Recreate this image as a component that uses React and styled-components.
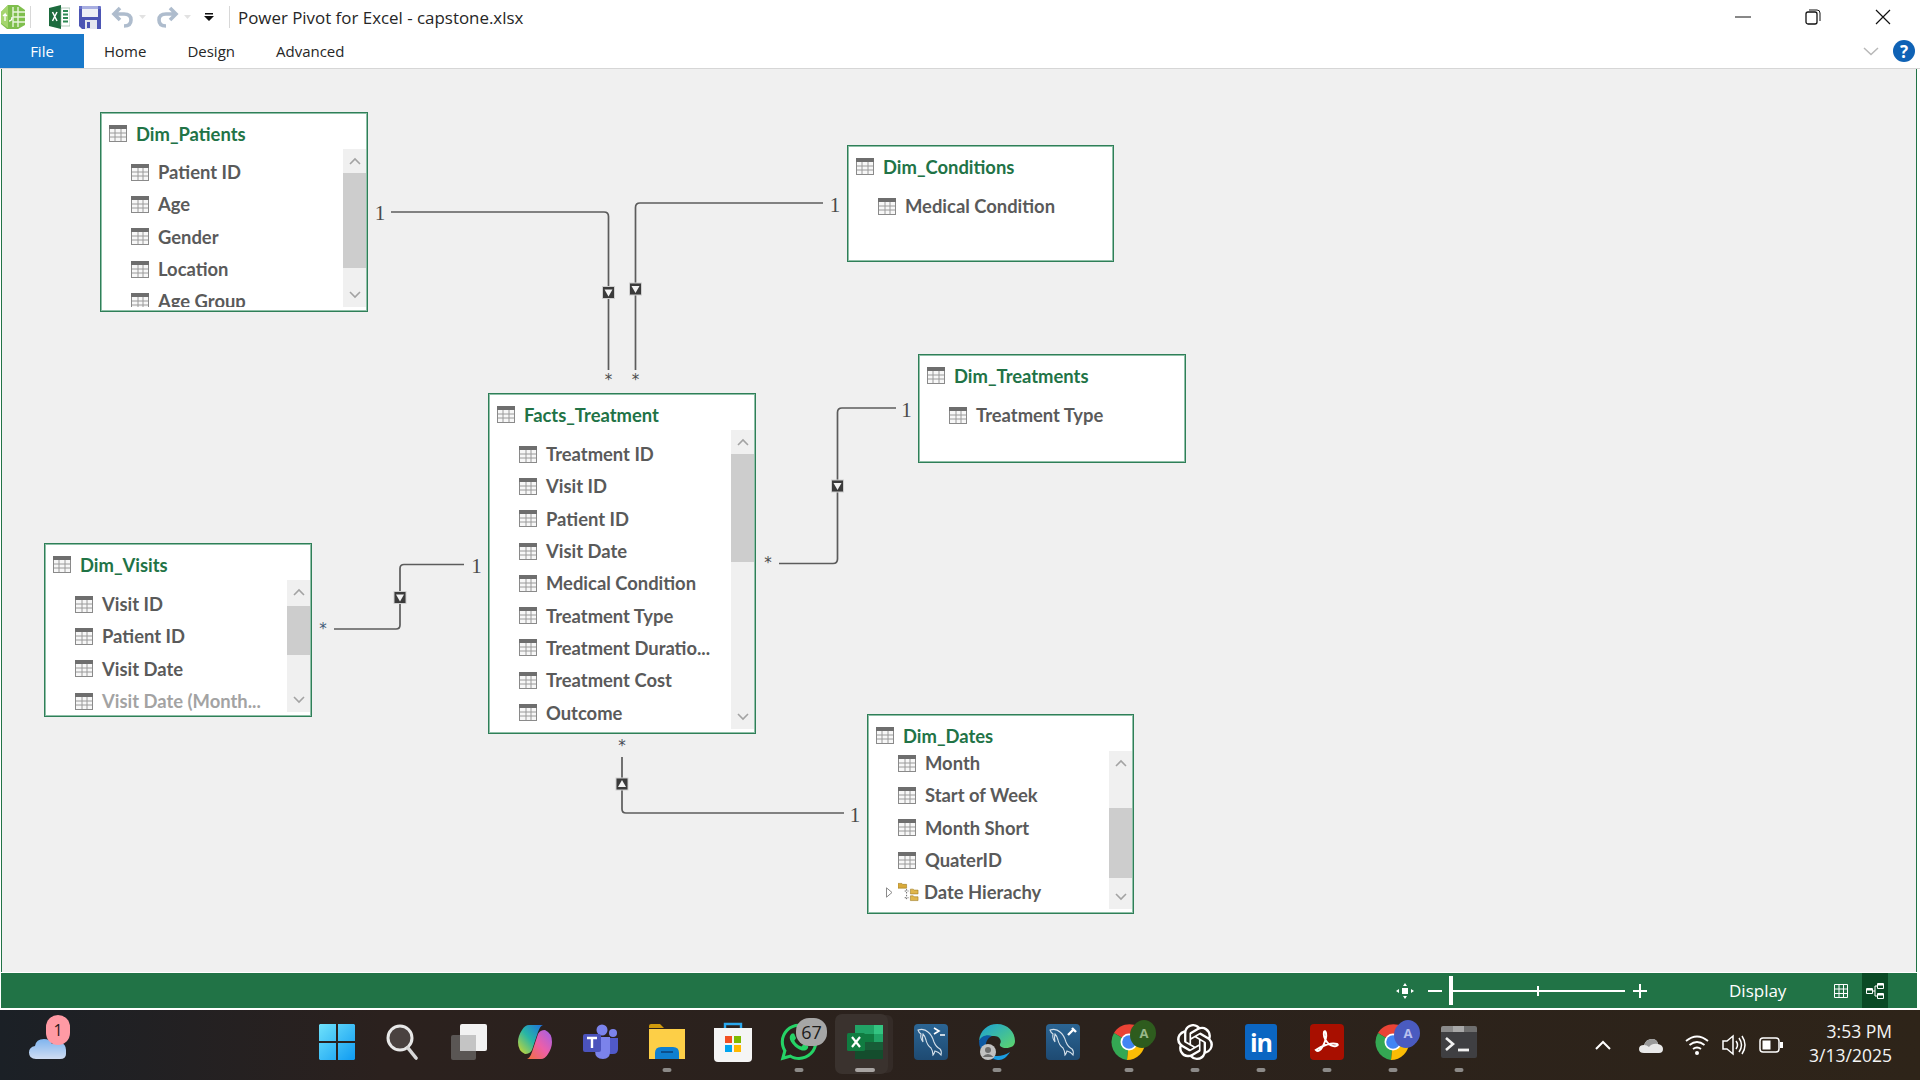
import React from "react"
import styled, { createGlobalStyle } from "styled-components"
import { FaWhatsapp } from "react-icons/fa"
import { SiOpenai } from "react-icons/si"

const UI = `"Open Sans", "Noto Sans", sans-serif`
const FIELD = `Lato, "Noto Sans", sans-serif`
const CANVAS_X = 2
const CANVAS_Y = 69

const GlobalStyle = createGlobalStyle`
  html, body { margin: 0; padding: 0; background: #fff; }
  * { box-sizing: border-box; }
`

const Page = styled.div`
  width: 1920px;
  height: 1080px;
  display: flex;
  flex-direction: column;
  overflow: hidden;
  background: #fff;
  font-family: ${UI};
`

/* title bar */
const TitleBar = styled.div`
  height: 34px;
  display: flex;
  align-items: center;
  flex-shrink: 0;
`
const QuickIcon = styled.div`
  width: ${p => p.$w}px;
  margin-left: ${p => p.$ml || 0}px;
  display: flex;
  align-items: center;
  justify-content: center;
`
const Divider = styled.div`
  width: 1px;
  height: 22px;
  background: #d8d8d8;
  margin-left: ${p => p.$ml}px;
`
const Title = styled.div`
  margin-left: 8px;
  font-size: 16.9px;
  color: #262626;
  white-space: nowrap;
`
const WindowControls = styled.div`
  margin-left: auto;
  display: flex;
  padding-right: 2px;
`
const WindowButton = styled.div`
  width: 70px;
  height: 34px;
  display: flex;
  align-items: center;
  justify-content: center;
`

/* ribbon tabs */
const TabBar = styled.div`
  height: 35px;
  display: flex;
  align-items: flex-start;
  border-bottom: 1px solid #d6d6d6;
  flex-shrink: 0;
`
const FileTab = styled.div`
  width: 84px;
  height: 34px;
  background: #1979ca;
  color: #fff;
  font-size: 15px;
  display: flex;
  align-items: center;
  justify-content: center;
`
const Tab = styled.div`
  height: 34px;
  margin-left: ${p => p.$ml}px;
  display: flex;
  align-items: center;
  font-size: 15px;
  color: #262626;
`
const TabTools = styled.div`
  margin-left: auto;
  height: 34px;
  display: flex;
  align-items: center;
  gap: 14px;
  padding-right: 5px;
`
const Help = styled.div`
  width: 22px;
  height: 22px;
  border-radius: 50%;
  background: #0f62b5;
  color: #fff;
  font: 700 17px ${UI};
  display: flex;
  align-items: center;
  justify-content: center;
`

/* diagram */
const Canvas = styled.div`
  flex: 1;
  min-height: 0;
  position: relative;
  margin: 0 3px 0 1px;
  background: #f0f0f0;
  border-left: 1px solid #217346;
  border-right: 1px solid #217346;
`
const Wires = styled.svg`
  position: absolute;
  left: 0;
  top: 0;
`
const Mark = styled.span`
  position: absolute;
  left: ${p => p.$x - CANVAS_X}px;
  top: ${p => p.$y - CANVAS_Y}px;
  transform: translate(-50%, -50%);
  line-height: 1;
  color: ${p => p.$color || "#4a4a4a"};
  font-family: ${p => (p.$star ? `"DejaVu Sans", sans-serif` : `"Liberation Serif", serif`)};
  font-size: ${p => (p.$star ? 15 : 21)}px;
`
const TableBox = styled.div`
  position: absolute;
  left: ${p => p.$x - CANVAS_X}px;
  top: ${p => p.$y - CANVAS_Y}px;
  width: ${p => p.$w}px;
  height: ${p => p.$h}px;
  background: #fff;
  border: 1px solid #2f7f58;
  box-shadow: inset 0 0 0 1px #8fc0a8;
  padding: 1px 1px 4px;
  display: flex;
  flex-direction: column;
`
const TableHead = styled.div`
  height: 35px;
  flex-shrink: 0;
  display: flex;
  align-items: center;
  gap: 9px;
  padding: 4px 0 0 7px;
  font: 700 18.4px ${FIELD};
  color: #217346;
`
const TableBody = styled.div`
  flex: 1;
  min-height: 0;
  display: flex;
`
const FieldList = styled.div`
  flex: 1;
  min-width: 0;
  overflow: hidden;
  & > :first-child {
    margin-top: ${p => p.$pad}px;
  }
`
const FieldRow = styled.div`
  height: 32.3px;
  display: flex;
  align-items: center;
  padding-left: ${p => (p.$tree ? 17 : 29)}px;
  gap: ${p => (p.$tree ? 5 : 9)}px;
  font: 700 18.4px ${FIELD};
  color: ${p => (p.$hidden ? "#a3a3a3" : "#5a5a5a")};
  white-space: nowrap;
`
const ScrollBar = styled.div`
  width: 23px;
  flex-shrink: 0;
  background: #f0f0f0;
  display: flex;
  flex-direction: column;
`
const ScrollButton = styled.div`
  height: 24px;
  flex-shrink: 0;
  display: flex;
  align-items: center;
  justify-content: center;
`
const ScrollTrack = styled.div`
  flex: 1;
  padding-top: ${p => p.$top}px;
`
const ScrollThumb = styled.div`
  height: ${p => p.$size}px;
  background: #cdcdcd;
`

/* status bar */
const StatusBar = styled.div`
  height: 35px;
  flex-shrink: 0;
  margin: 1px 3px 2px 1px;
  background: #217346;
  display: flex;
  align-items: center;
  color: #fff;
`
const StatusSpacer = styled.div`
  width: ${p => p.$w}px;
  flex-shrink: 0;
`
const ZoomTrack = styled.div`
  position: relative;
  width: 176px;
  height: 2px;
  background: #fff;
`
const ZoomHandle = styled.div`
  position: absolute;
  left: 0;
  top: -14px;
  width: 4px;
  height: 29px;
  background: #fff;
`
const ZoomTick = styled.div`
  position: absolute;
  left: 88px;
  top: -4px;
  width: 2px;
  height: 10px;
  background: #fff;
`
const DisplayLabel = styled.div`
  font-size: 17px;
  width: 72px;
  flex-shrink: 0;
`
const ViewButton = styled.div`
  width: 26px;
  height: 35px;
  display: flex;
  align-items: center;
  justify-content: center;
  background: ${p => (p.$active ? "#0a4a25" : "transparent")};
`

/* taskbar */
const TaskBar = styled.div`
  height: 70px;
  flex-shrink: 0;
  display: flex;
  align-items: stretch;
  background: linear-gradient(90deg, #1b2026 0%, #2b211e 20%, #2b221c 60%, #2e2419 100%);
  color: #fff;
`
const WeatherSlot = styled.div`
  width: 304px;
  flex-shrink: 0;
  position: relative;
  display: flex;
  align-items: center;
  padding-left: 28px;
`
const Slot = styled.div`
  width: 66px;
  flex-shrink: 0;
  position: relative;
  display: flex;
  align-items: center;
  justify-content: center;
  padding-bottom: 6px;
`
const ActiveBack = styled.div`
  position: absolute;
  left: 3px;
  top: 4px;
  width: 53px;
  height: 60px;
  border-radius: 7px;
  background: #3a322e;
  box-shadow: 6px 0 0 -1px #342b27;
`
const Dot = styled.div`
  position: absolute;
  left: 50%;
  bottom: 8px;
  width: ${p => (p.$long ? 20 : 9)}px;
  height: 4px;
  border-radius: 2px;
  background: ${p => (p.$long ? "#a8a4a2" : "#8c8a88")};
  transform: translateX(-50%);
`
const CountBadge = styled.div`
  position: absolute;
  left: ${p => p.$x}px;
  top: ${p => p.$y}px;
  min-width: ${p => p.$w}px;
  height: ${p => p.$h}px;
  padding: 0 2px;
  border-radius: 13px;
  background: ${p => p.$bg};
  color: ${p => p.$fg};
  font-size: ${p => p.$size}px;
  display: flex;
  align-items: center;
  justify-content: center;
`
const Avatar = styled.div`
  position: absolute;
  left: 36px;
  top: 10px;
  width: 24px;
  height: 26px;
  border-radius: 50%;
  background: ${p => p.$bg};
  color: ${p => p.$fg};
  box-shadow: -2px 2px 0 ${p => p.$bg};
  font: 700 13px ${UI};
  display: flex;
  align-items: center;
  justify-content: center;
`
const LinkedIn = styled.div`
  width: 32px;
  height: 36px;
  border-radius: 3px;
  background: #0b66c2;
  color: #fff;
  font: 700 25px ${UI};
  letter-spacing: -1px;
  display: flex;
  align-items: center;
  justify-content: center;
`
const Tray = styled.div`
  margin-left: auto;
  display: flex;
  align-items: center;
  padding-right: 28px;
`
const TrayIcon = styled.div`
  width: ${p => p.$w}px;
  flex-shrink: 0;
  display: flex;
  align-items: center;
  justify-content: center;
`
const Clock = styled.div`
  margin-left: 16px;
  text-align: right;
  font-size: 17.5px;
  line-height: 24px;
  color: #f4f4f4;
  padding-bottom: 4px;
`
const WorkbenchTile = styled.div`
  width: 34px;
  height: 36px;
  border-radius: 4px;
  background: linear-gradient(180deg, #2b6594, #1e4a72);
  display: flex;
  align-items: center;
  justify-content: center;
`
const ExcelSvg = styled.svg`
  position: relative;
`

const TableIcon = ({ field }) => (
  <svg width="18" height="17" viewBox="0 0 18 17">
    <rect x="0.5" y="0.5" width="17" height="16" fill="#f7f7f7" stroke="#8a8a8a" />
    <rect x="0" y="0" width="18" height="4" fill="#6e6e6e" />
    <path
      d={field ? "M1 8h16M1 12h16M7 4v12M12 4v12" : "M1 8h16M1 12h16M6 4v12M12 4v12"}
      stroke="#9a9a9a"
      fill="none"
    />
  </svg>
)

const ArrowGlyph = ({ down }) => (
  <svg width="12" height="8" viewBox="0 0 12 8">
    <path d={down ? "M1 1l5 5 5-5" : "M1 7l5-5 5 5"} fill="none" stroke="#a3a3a3" strokeWidth="1.6" />
  </svg>
)

const Marker = ({ x, y, up }) => (
  <g>
    <rect x={x - 6.5} y={y - 6.5} width="13" height="13" fill="#cfcfcf" />
    <rect x={x - 5.5} y={y - 5.5} width="11" height="11" fill="#3b3b3b" />
    <path
      d={up ? `M${x} ${y - 4}l4 7h-8z` : `M${x - 4} ${y - 3}h8l-4 7z`}
      fill="#f4f4f4"
    />
  </g>
)

const HierarchyIcon = () => (
  <svg width="21" height="20" viewBox="0 0 22 20">
    <path d="M0 1h4l1 1h4v4H0z" fill="#d9aa3a" stroke="#9a7a20" strokeWidth=".6" />
    <path d="M13 7h3l1 1h4v4h-8zM13 14h3l1 1h4v4h-8z" fill="#e0b64c" stroke="#9a7a20" strokeWidth=".6" />
    <path d="M7 9h4M7 16h4M9 7v11" stroke="#666" strokeDasharray="1.5 1.5" />
  </svg>
)

const DiagramTable = ({ name, x, y, w, h, pad, fields, thumb }) => (
  <TableBox $x={x} $y={y} $w={w} $h={h}>
    <TableHead>
      <TableIcon />
      {name}
    </TableHead>
    <TableBody>
      <FieldList $pad={pad}>
        {fields.map(f => (
          <FieldRow key={f.label} $hidden={f.hidden} $tree={f.tree}>
            {f.tree ? (
              <>
                <svg width="7" height="11" viewBox="0 0 7 11">
                  <path d="M.5.8l5.5 4.7-5.5 4.7z" fill="#fff" stroke="#8a8a8a" />
                </svg>
                <HierarchyIcon />
              </>
            ) : (
              <TableIcon field />
            )}
            {f.label}
          </FieldRow>
        ))}
      </FieldList>
      {thumb && (
        <ScrollBar>
          <ScrollButton>
            <ArrowGlyph />
          </ScrollButton>
          <ScrollTrack $top={thumb.top}>
            <ScrollThumb $size={thumb.size} />
          </ScrollTrack>
          <ScrollButton>
            <ArrowGlyph down />
          </ScrollButton>
        </ScrollBar>
      )}
    </TableBody>
  </TableBox>
)

const names = list => list.map(label => ({ label }))

const tables = [
  {
    name: "Dim_Patients", x: 100, y: 112, w: 268, h: 200, pad: 7,
    fields: names(["Patient ID", "Age", "Gender", "Location", "Age Group"]),
    thumb: { top: 0, size: 95 },
  },
  {
    name: "Dim_Conditions", x: 847, y: 145, w: 267, h: 117, pad: 8,
    fields: names(["Medical Condition"]),
  },
  {
    name: "Dim_Treatments", x: 918, y: 354, w: 268, h: 109, pad: 8,
    fields: names(["Treatment Type"]),
  },
  {
    name: "Facts_Treatment", x: 488, y: 393, w: 268, h: 341, pad: 8,
    fields: names([
      "Treatment ID", "Visit ID", "Patient ID", "Visit Date", "Medical Condition",
      "Treatment Type", "Treatment Duratio...", "Treatment Cost", "Outcome",
    ]),
    thumb: { top: 0, size: 108 },
  },
  {
    name: "Dim_Visits", x: 44, y: 543, w: 268, h: 174, pad: 8,
    fields: [
      ...names(["Visit ID", "Patient ID", "Visit Date"]),
      { label: "Visit Date (Month...", hidden: true },
    ],
    thumb: { top: 2, size: 49 },
  },
  {
    name: "Dim_Dates", x: 867, y: 714, w: 267, h: 200, pad: -4,
    fields: [
      ...names(["Month", "Start of Week", "Month Short", "QuaterID"]),
      { label: "Date Hierachy", tree: true },
    ],
    thumb: { top: 33, size: 70 },
  },
]

const wires = [
  "M391 212H604q4.500 0 4.500 4.500V370",
  "M823 203H640q-4.500 0-4.500 4.500V370",
  "M896 408H842q-4.500 0-4.500 4.500V559q0 4.500-4.500 4.500H779",
  "M464 564.500H404q-4 0-4 4V625q0 4-4 4H334",
  "M844 813H626q-4 0-4-4V757",
]

const PowerPivotIcon = () => (
  <svg width="26" height="26" viewBox="0 0 26 26">
    <path d="M1 8l7-7h10l7 5v15l-7 4H7l-6-5z" fill="#7fbf4d" />
    <path d="M13 3v20M18 3v20M13 8h12M13 13h12M13 18h12" stroke="#e9f5dc" strokeWidth="1.4" />
    <path d="M1 8l7-7v23l-7-5z" fill="#a5d56f" />
    <path d="M5 17v-7l-2 2M5 10l2 2M9 17q3 0 3-4" stroke="#fff" strokeWidth="1.3" fill="none" />
  </svg>
)

const ExcelBook = () => (
  <svg width="21" height="24" viewBox="0 0 21 24">
    <path d="M0 3l12-3v24L0 21z" fill="#1d6b3e" />
    <path d="M12 3h9v18h-9z" fill="#fff" stroke="#7fa88f" strokeWidth=".6" />
    <path d="M14 6h5M14 9.500h5M14 13h5M14 16.500h5" stroke="#2f8a55" strokeWidth="2" />
    <path d="M3.500 7l4.500 9M8 7l-4.500 9" stroke="#fff" strokeWidth="1.500" />
  </svg>
)

const SaveIcon = () => (
  <svg width="22" height="24" viewBox="0 0 22 24">
    <path d="M0 1h21l1 1v22H3l-3-3z" fill="#4c55b4" />
    <path d="M3 1h16v11H3z" fill="#eef0f6" />
    <path d="M6 15h12v9H6z" fill="#e4e6ee" />
    <path d="M8 17h3v6H8z" fill="#4c55b4" />
    <path d="M0 1h22v3H0z" fill="#7a82d4" opacity=".6" />
  </svg>
)

const UndoIcon = ({ flip }) => (
  <svg width="23" height="22" viewBox="0 0 23 22" style={flip ? { transform: "scaleX(-1)" } : undefined}>
    <path
      d="M9 2L3 8l6 6M3 8h10q7 0 7 6t-7 6"
      fill="none"
      stroke="#aebccd"
      strokeWidth="3.600"
    />
  </svg>
)

const Caret = () => (
  <svg width="10" height="6" viewBox="0 0 10 6">
    <path d="M1 1h7L4.500 5z" fill="#e2e2e2" />
  </svg>
)

const WeatherIcon = () => (
  <svg width="40" height="32" viewBox="0 0 40 32">
    <defs>
      <linearGradient id="cloud" x1="0" y1="0" x2="0" y2="1">
        <stop offset="0" stopColor="#7fb4ee" />
        <stop offset="1" stopColor="#cfdcf2" />
      </linearGradient>
    </defs>
    <rect x="26" y="0" width="10" height="10" fill="#e8761e" />
    <path d="M8 30q-7 0-7-6.500Q1 18 7 17q1-7 9-7 6 0 8 5 3-3 8-2 6 2 6 8v4q0 5-6 5z" fill="url(#cloud)" />
  </svg>
)

const StartIcon = () => (
  <svg width="36" height="36" viewBox="0 0 36 36">
    <defs>
      <linearGradient id="win" x1="0" y1="0" x2="1" y2="1">
        <stop offset="0" stopColor="#6fe2fb" />
        <stop offset="1" stopColor="#0f9bf2" />
      </linearGradient>
    </defs>
    <path d="M1 0h16v17H0V1zM19 0h16l1 1v16H19zM0 19h17v17H1l-1-1zM19 19h17v16l-1 1H19z" fill="url(#win)" />
  </svg>
)

const SearchIcon = () => (
  <svg width="34" height="36" viewBox="0 0 34 36">
    <circle cx="14" cy="14" r="12" fill="#4a4240" stroke="#e8e8e8" strokeWidth="3" />
    <path d="M22 24l8 10" stroke="#d8d8d8" strokeWidth="3.600" strokeLinecap="round" />
  </svg>
)

const TaskViewIcon = () => (
  <svg width="36" height="36" viewBox="0 0 36 36">
    <rect x="0" y="11" width="25" height="25" rx="2" fill="#5a5654" />
    <rect x="9" y="0" width="27" height="27" rx="2" fill="#f2f2f2" />
    <rect x="9" y="11" width="16" height="16" fill="#c4c4c4" />
  </svg>
)

const CopilotIcon = () => (
  <svg width="34" height="36" viewBox="0 0 34 36">
    <defs>
      <linearGradient id="co1" x1="0" y1="1" x2="1" y2="0">
        <stop offset="0" stopColor="#d7d92a" />
        <stop offset=".5" stopColor="#28b6a5" />
        <stop offset="1" stopColor="#1e6fe0" />
      </linearGradient>
      <linearGradient id="co2" x1="0" y1="1" x2="1" y2="0">
        <stop offset="0" stopColor="#f2703a" />
        <stop offset=".5" stopColor="#ec5fa8" />
        <stop offset="1" stopColor="#a060e8" />
      </linearGradient>
    </defs>
    <path d="M11 1h14q-3 1-5 7l-6 18q-2 4-7 4-7-3-7-12 0-6 4-12 3-5 7-5z" fill="url(#co1)" />
    <path d="M23 35H9q3-1 5-7l6-18q2-4 7-4 7 3 7 12 0 6-4 12-3 5-7 5z" fill="url(#co2)" />
  </svg>
)

const TeamsIcon = () => (
  <svg width="36" height="36" viewBox="0 0 36 36">
    <circle cx="30" cy="9" r="4" fill="#7b83eb" />
    <circle cx="19" cy="6" r="5.500" fill="#7b83eb" />
    <path d="M25 14h10v11q0 5-5 5h-5z" fill="#5059c9" />
    <path d="M12 13h15v15q0 7-7 7-8 0-8-8z" fill="#7b83eb" />
    <rect x="0" y="10" width="18" height="18" rx="2" fill="#4b53bc" />
    <path d="M4 14h10M9 14v10" stroke="#fff" strokeWidth="2.400" />
  </svg>
)

const FolderIcon = () => (
  <svg width="36" height="36" viewBox="0 0 36 36">
    <path d="M0 2q0-2 2-2h9l4 4H0z" fill="#cf9a0c" />
    <path d="M0 5h36v30H0z" fill="#fdcf47" />
    <path d="M6 35v-6q0-6 6-6h12q6 0 6 6v6z" fill="#0f7fd1" />
    <path d="M12 28h12" stroke="#0b4f8e" strokeWidth="2" />
  </svg>
)

const StoreIcon = () => (
  <svg width="40" height="40" viewBox="0 0 40 40">
    <path d="M12 6V2h16v4" fill="none" stroke="#2aa8ee" strokeWidth="2.400" />
    <path d="M1 6h38v30q0 4-4 4H5q-4 0-4-4z" fill="#f5f5f5" />
    <path d="M12 14h7v7h-7z" fill="#f25022" />
    <path d="M21 14h7v7h-7z" fill="#7fba00" />
    <path d="M12 23h7v7h-7z" fill="#00a4ef" />
    <path d="M21 23h7v7h-7z" fill="#ffb900" />
  </svg>
)

const ExcelIcon = () => (
  <ExcelSvg width="36" height="34" viewBox="0 0 36 34">
    <path d="M8 0h19v9H8z" fill="#21a366" />
    <path d="M27 0h9v9h-9z" fill="#33c481" />
    <path d="M8 9h19v8H8z" fill="#107c41" />
    <path d="M27 9h9v8h-9z" fill="#21a366" />
    <path d="M8 17h28v8H8z" fill="#185c37" />
    <path d="M8 25h28v9H8z" fill="#144d2d" />
    <rect x="0" y="8" width="18" height="18" rx="1.500" fill="#107c41" />
    <path d="M5 12l8 10M13 12L5 22" stroke="#fff" strokeWidth="2.200" />
  </ExcelSvg>
)

// dolphin outline, with the console prompt or the wrench top right
const WorkbenchIcon = ({ wrench }) => (
  <WorkbenchTile>
    <svg width="30" height="32" viewBox="0 0 30 32" fill="none" stroke="#d5e0ea" strokeWidth="1.100">
      <path d="M2 4q6-2 10 2 4 3 6 10 2 5 6 7 2 2 1 6-2-3-6-4-1 3-2 4 0-4-2-7-4-3-5-8-1-4-3-6-1 4 0 8-3-4-2-8-2-1-3-4z" />
      {wrench ? (
        <path d="M20 9l6-6M24 2l4 4" stroke="#fff" strokeWidth="2.400" />
      ) : (
        <path d="M18 2l5 3-5 3M24 9h5" stroke="#fff" strokeWidth="1.600" />
      )}
    </svg>
  </WorkbenchTile>
)

const EdgeIcon = () => (
  <svg width="36" height="36" viewBox="0 0 36 36">
    <defs>
      <linearGradient id="edge" x1="0" y1="0" x2="1" y2="1">
        <stop offset="0" stopColor="#1aa0d8" />
        <stop offset="1" stopColor="#5fd66a" />
      </linearGradient>
    </defs>
    <path d="M0 17C1 6 9 0 18 0c11 0 18 8 18 17 0 5-4 7-9 7-4 0-7-2-6-4 2-3 0-8-6-8-7 0-14 2-15 5z" fill="url(#edge)" />
    <path d="M0 17c2-5 8-7 13-5-5 2-7 7-6 13 1 5 6 11 13 11C8 36 0 28 0 17z" fill="#0c59a4" />
    <path d="M20 36c-3 0-8-2-10-6 5 3 14 3 21-2-3 5-7 8-11 8z" fill="#1b9de2" />
    <circle cx="9" cy="28" r="8" fill="#c2c2c2" />
    <circle cx="9" cy="26" r="3" fill="#6d6d6d" />
    <path d="M3.500 33q5.500-6 11 0z" fill="#6d6d6d" />
  </svg>
)

const ChromeIcon = () => (
  <svg width="36" height="36" viewBox="0 0 36 36">
    <path d="M18 18L3 9a18 18 0 0 1 31 0z" fill="#ea4335" />
    <path d="M18 18l-15-9a18 18 0 0 0 13 27z" fill="#34a853" />
    <path d="M18 18h16a18 18 0 0 1-18 18z" fill="#fbbc05" />
    <circle cx="18" cy="18" r="8.500" fill="#fff" />
    <circle cx="18" cy="18" r="6.800" fill="#4285f4" />
  </svg>
)

const AcrobatIcon = () => (
  <svg width="34" height="36" viewBox="0 0 34 36">
    <rect width="34" height="36" rx="4" fill="#a80f00" />
    <path
      d="M6 26q3 3 7-4 4-8 3-13-1-3-2-1-1 5 3 10 4 5 9 4 3-1 1-2-6-2-16 3z"
      fill="none"
      stroke="#fff"
      strokeWidth="2"
    />
  </svg>
)

const TerminalIcon = () => (
  <svg width="36" height="32" viewBox="0 0 36 32">
    <path d="M2 0h10v6H0V2q0-2 2-2z" fill="#8a8a8a" />
    <path d="M12 0h11v6H12z" fill="#a8a8a8" />
    <path d="M23 0h11q2 0 2 2v4H23z" fill="#6e6e6e" />
    <path d="M0 6h36v24q0 2-2 2H2q-2 0-2-2z" fill="#3f3f42" />
    <path d="M5 12l7 6-7 6" fill="none" stroke="#f2f2f2" strokeWidth="2.600" />
    <path d="M17 24h11" stroke="#f2f2f2" strokeWidth="2.800" />
  </svg>
)

const App = () => (
  <Page>
    <GlobalStyle />
    <TitleBar>
      <QuickIcon $w={26}>
        <PowerPivotIcon />
      </QuickIcon>
      <Divider $ml={4} />
      <QuickIcon $w={22} $ml={17}>
        <ExcelBook />
      </QuickIcon>
      <QuickIcon $w={22} $ml={9}>
        <SaveIcon />
      </QuickIcon>
      <QuickIcon $w={23} $ml={10}>
        <UndoIcon />
      </QuickIcon>
      <QuickIcon $w={12} $ml={3}>
        <Caret />
      </QuickIcon>
      <QuickIcon $w={23} $ml={7}>
        <UndoIcon flip />
      </QuickIcon>
      <QuickIcon $w={12} $ml={3}>
        <Caret />
      </QuickIcon>
      <QuickIcon $w={10} $ml={10}>
        <svg width="10" height="8" viewBox="0 0 10 8">
          <path d="M1 0h8v1.400H1zM0 3h10L5 8z" fill="#111" />
        </svg>
      </QuickIcon>
      <Divider $ml={15} />
      <Title>Power Pivot for Excel - capstone.xlsx</Title>
      <WindowControls>
        <WindowButton>
          <svg width="16" height="2" viewBox="0 0 16 2">
            <path d="M0 1h16" stroke="#111" />
          </svg>
        </WindowButton>
        <WindowButton>
          <svg width="16" height="16" viewBox="0 0 16 16">
            <rect x="1" y="3" width="11" height="12" rx="2" fill="none" stroke="#111" strokeWidth="1.300" />
            <path d="M4 1h8q3 0 3 3v8" fill="none" stroke="#111" />
          </svg>
        </WindowButton>
        <WindowButton>
          <svg width="16" height="16" viewBox="0 0 16 16">
            <path d="M1 1l14 14M15 1L1 15" stroke="#111" strokeWidth="1.200" />
          </svg>
        </WindowButton>
      </WindowControls>
    </TitleBar>

    <TabBar>
      <FileTab>File</FileTab>
      <Tab $ml={20}>Home</Tab>
      <Tab $ml={41}>Design</Tab>
      <Tab $ml={41}>Advanced</Tab>
      <TabTools>
        <svg width="16" height="9" viewBox="0 0 16 9">
          <path d="M1 1l7 6.500L15 1" fill="none" stroke="#b8b8b8" strokeWidth="1.500" />
        </svg>
        <Help>?</Help>
      </TabTools>
    </TabBar>

    <Canvas>
      <Wires width="1914" height="903" viewBox={`${CANVAS_X} ${CANVAS_Y} 1914 903`}>
        {wires.map(d => (
          <path key={d} d={d} fill="none" stroke="#5c5c5c" strokeWidth="1.700" />
        ))}
        <Marker x={608.500} y={292.500} />
        <Marker x={635.500} y={289} />
        <Marker x={837.500} y={486} />
        <Marker x={400} y={597.500} />
        <Marker x={622} y={784} up />
      </Wires>
      <Mark $x={380} $y={213}>1</Mark>
      <Mark $x={835} $y={205}>1</Mark>
      <Mark $x={906.500} $y={410}>1</Mark>
      <Mark $x={476.500} $y={566}>1</Mark>
      <Mark $x={855} $y={815}>1</Mark>
      <Mark $star $x={608.500} $y={380}>*</Mark>
      <Mark $star $x={635.500} $y={380}>*</Mark>
      <Mark $star $x={768} $y={563}>*</Mark>
      <Mark $star $x={323} $y={629} $color="#3f5a78">*</Mark>
      <Mark $star $x={622} $y={746} $color="#454a55">*</Mark>
      {tables.map(t => (
        <DiagramTable key={t.name} {...t} />
      ))}
    </Canvas>

    <StatusBar>
      <StatusSpacer $w={1395} />
      <svg width="18" height="16" viewBox="0 0 18 16">
        <path d="M6 5h6v6H6zM9 0l2 3H7zM9 16l-2-3h4zM0 8l3-2v4zM18 8l-3 2V6z" fill="#fff" />
      </svg>
      <StatusSpacer $w={14} />
      <svg width="14" height="2" viewBox="0 0 14 2">
        <path d="M0 1h14" stroke="#fff" strokeWidth="2" />
      </svg>
      <StatusSpacer $w={7} />
      <ZoomTrack>
        <ZoomHandle />
        <ZoomTick />
      </ZoomTrack>
      <StatusSpacer $w={8} />
      <svg width="14" height="14" viewBox="0 0 14 14">
        <path d="M7 0v14M0 7h14" stroke="#fff" strokeWidth="2" />
      </svg>
      <StatusSpacer $w={82} />
      <DisplayLabel>Display</DisplayLabel>
      <StatusSpacer $w={27} />
      <ViewButton>
        <svg width="14" height="14" viewBox="0 0 14 14">
          <path d="M.5.500h13v13H.5zM.5 5h13M.5 9.500h13M5 .500v13M9.500.500v13" fill="none" stroke="#fff" />
        </svg>
      </ViewButton>
      <StatusSpacer $w={8} />
      <ViewButton $active>
        <svg width="18" height="18" viewBox="0 0 18 18">
          <path d="M.5 6.500h6v5h-6zM11.500 1.500h6v5h-6zM11.500 11.500h6v5h-6zM6.500 9h2.500V4h2.500M9 9v5h2.500" fill="none" stroke="#fff" />
          <path d="M1 7h5v1.500H1zM12 2h5v1.500h-5zM12 12h5v1.500h-5z" fill="#fff" />
        </svg>
      </ViewButton>
    </StatusBar>

    <TaskBar>
      <WeatherSlot>
        <WeatherIcon />
        <CountBadge $x={46} $y={5} $w={24} $h={30} $bg="#ff9aa4" $fg="#2a1a1a" $size={16}>1</CountBadge>
      </WeatherSlot>
      <Slot><StartIcon /></Slot>
      <Slot><SearchIcon /></Slot>
      <Slot><TaskViewIcon /></Slot>
      <Slot><CopilotIcon /></Slot>
      <Slot><TeamsIcon /></Slot>
      <Slot><FolderIcon /><Dot /></Slot>
      <Slot><StoreIcon /></Slot>
      <Slot>
        <FaWhatsapp size={42} color="#25d366" />
        <CountBadge $x={30} $y={8} $w={31} $h={28} $bg="#a6a6a6" $fg="#1c1c1c" $size={18}>67</CountBadge>
        <Dot />
      </Slot>
      <Slot>
        <ActiveBack />
        <ExcelIcon />
        <Dot $long />
      </Slot>
      <Slot><WorkbenchIcon /></Slot>
      <Slot><EdgeIcon /><Dot /></Slot>
      <Slot><WorkbenchIcon wrench /></Slot>
      <Slot>
        <ChromeIcon />
        <Avatar $bg="#2e5c1e" $fg="#9ab88a">A</Avatar>
        <Dot />
      </Slot>
      <Slot><SiOpenai size={36} color="#fff" /><Dot /></Slot>
      <Slot><LinkedIn>in</LinkedIn><Dot /></Slot>
      <Slot><AcrobatIcon /><Dot /></Slot>
      <Slot>
        <ChromeIcon />
        <Avatar $bg="#4a5bc0" $fg="#b8c0ee">A</Avatar>
        <Dot />
      </Slot>
      <Slot><TerminalIcon /><Dot /></Slot>
      <Tray>
        <TrayIcon $w={48}>
          <svg width="16" height="10" viewBox="0 0 16 10">
            <path d="M1 9l7-7 7 7" fill="none" stroke="#fff" strokeWidth="2" />
          </svg>
        </TrayIcon>
        <TrayIcon $w={48}>
          <svg width="24" height="16" viewBox="0 0 24 16">
            <path d="M5 16q-5 0-5-4 0-4 5-4 2-6 8-6 5 0 6 5 5 1 5 5 0 4-4 4z" fill="#e8e8e8" />
            <path d="M5 8q2-6 8-6 5 0 6 5-6-1-9 3-2-2-5-2z" fill="#9a9a9a" />
          </svg>
        </TrayIcon>
        <TrayIcon $w={44}>
          <svg width="24" height="20" viewBox="0 0 24 20">
            <path d="M1 6q11-9 22 0M4.500 10q7.500-6 15 0M8 14q4-3 8 0" fill="none" stroke="#fff" strokeWidth="1.800" />
            <circle cx="12" cy="18" r="2" fill="#fff" />
          </svg>
        </TrayIcon>
        <TrayIcon $w={30}>
          <svg width="24" height="22" viewBox="0 0 24 22">
            <path d="M1 7h4l6-5v18l-6-5H1z" fill="none" stroke="#fff" strokeWidth="1.500" />
            <path d="M14 7q3 4 0 8M17 4q5 7 0 14M20 2q6 9 0 18" fill="none" stroke="#fff" strokeWidth="1.500" />
          </svg>
        </TrayIcon>
        <TrayIcon $w={44}>
          <svg width="24" height="16" viewBox="0 0 24 16">
            <rect x="1" y="1" width="19" height="14" rx="3" fill="none" stroke="#fff" strokeWidth="1.500" />
            <rect x="3.500" y="3.500" width="8" height="9" fill="#fff" />
            <rect x="21" y="5" width="3" height="6" fill="#fff" />
          </svg>
        </TrayIcon>
        <Clock>
          <div>3:53 PM</div>
          <div>3/13/2025</div>
        </Clock>
      </Tray>
    </TaskBar>
  </Page>
)

export default App
